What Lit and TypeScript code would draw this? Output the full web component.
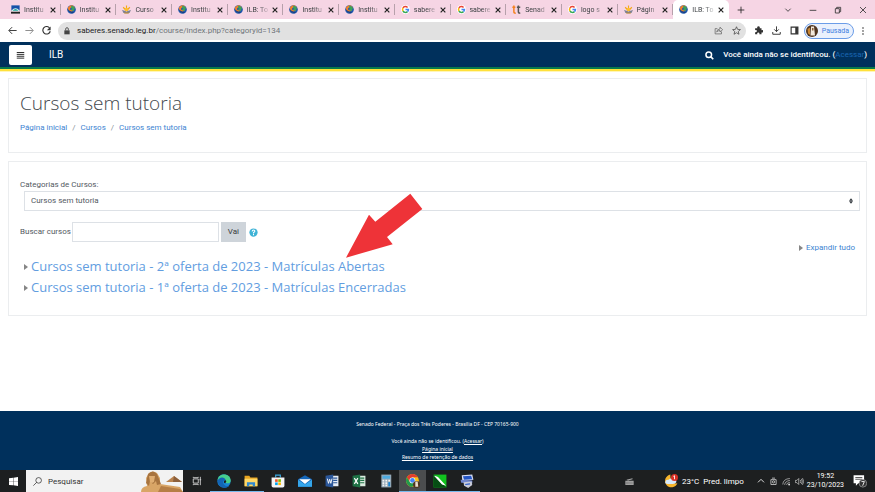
import { LitElement, html, css, svg } from "lit";
import { customElement } from "lit/decorators.js";
import { classMap } from "lit/directives/class-map.js";

type Icon = ReturnType<typeof svg>;

const draw = (body: Icon, cls = "i9", box = "0 0 24 24") =>
  html`<svg class=${cls} viewBox=${box} aria-hidden="true">${body}</svg>`;

const globe = svg`<circle cx="12" cy="12" r="11.5" fill="#1f58ab"/>
  <path d="M2 7Q8-1 16 1l4 5-3 9-8 4-5-5z" fill="#f07f2a"/>
  <path d="M11 2q8 0 10 7l-4 7-6-2z" fill="#3aa35c"/><path d="M1 12q5 8 13 10l5-3-8-2z" fill="#163f86"/>
  <path d="M9 7l4 1-2 6-3-2z" fill="#1f58ab"/>`;
const senate = svg`<path d="M1 1h22v14H1z" fill="#1552a8"/><path d="M1 15Q12 2 23 15l-4 2H5z" fill="#eaf6f4"/>
  <path d="M4 15q8-9 16 0z" fill="#20a5a0"/><path d="M0 18h24v5H0z" fill="#222"/>`;
const sun = svg`<g stroke="#f2a71b" stroke-width="3"><path d="M12 1v9M3 6l6 6M21 6l-6 6"/></g>
  <circle cx="12" cy="12" r="5" fill="#ffbe2e"/><path d="M0 13l9 3 3 2 3-2 9-3-4 8H4z" fill="#7d8295"/>
  <path d="M6 20h12v3H6z" fill="#b98935"/>`;
const google = svg`<circle cx="12" cy="12" r="12" fill="#fff"/><g fill="none" stroke-width="4">
  <path d="M17.5 6.5A7.8 7.8 0 0 0 5.3 8" stroke="#ea4335"/><path d="M5.3 8a7.8 7.8 0 0 0 0 8" stroke="#fbbc05"/>
  <path d="M5.3 16a7.8 7.8 0 0 0 12 1.6" stroke="#34a853"/><path d="M12 12h7.8a7.8 7.8 0 0 1-2.5 5.6" stroke="#4285f4"/></g>`;
const tt = svg`<g fill="none" stroke-width="4"><path d="M5 1v17q0 4 5 4M1 6h8" stroke="#f58220"/>
  <path d="M17 1v17q0 4 5 4M13 6h9" stroke="#555"/></g>`;

const TABS: { icon: Icon; label: string; active?: boolean }[] = [
  { icon: senate, label: "Institu" },
  { icon: globe, label: "Institu" },
  { icon: sun, label: "Curso" },
  { icon: globe, label: "Institu" },
  { icon: globe, label: "ILB: To" },
  { icon: globe, label: "Institu" },
  { icon: globe, label: "Institu" },
  { icon: google, label: "sabere" },
  { icon: google, label: "sabere" },
  { icon: tt, label: "Senad" },
  { icon: google, label: "logo s" },
  { icon: sun, label: "Págin" },
  { icon: globe, label: "ILB: To", active: true },
];

const line = (d: string) => svg`<path d=${d} fill="none" stroke="currentColor" stroke-width="2.5"/>`;
const cross = svg`<path d="M5 5l14 14M19 5L5 19" fill="none" stroke="currentColor" stroke-width="3.5"/>`;

@customElement("browser-chrome")
export class BrowserChrome extends LitElement {
  static styles = css`
    :host { display: block; font: 7px/10px Roboto, sans-serif; color: #3c4043; }
    button { border: 0; padding: 0; margin: 0; background: none; color: inherit; font: inherit; display: flex; align-items: center; justify-content: center; }
    svg { display: block; flex: none; }
    .i8 { width: 8px; height: 8px; }
    .i9 { width: 9px; height: 9px; }
    .i10 { width: 10px; height: 10px; }
    .i12 { width: 12px; height: 12px; }
    .strip { display: flex; height: 19px; background: #f6d5e4; padding-left: 5px; }
    .tabs { display: flex; flex: 0 1 724px; min-width: 0; }
    .tab { flex: 1 1 0; min-width: 0; display: flex; align-items: center; padding: 0 4px 0 6px; box-sizing: border-box; background: linear-gradient(#b7a0ab, #b7a0ab) right center / 1px 11px no-repeat; }
    .tab.active { background: #fff; border-radius: 5px 5px 0 0; }
    .label { flex: 1; min-width: 0; margin: 0 1px 0 4px; white-space: nowrap; mask-image: linear-gradient(90deg, #000 50%, transparent); }
    .close { color: #222; }
    .plus { width: 24px; color: #222; }
    .win { margin-left: auto; display: flex; }
    .win button { width: 25px; color: #333; }
    .bar { display: flex; align-items: center; height: 23px; padding: 0 8px; background: #fff; box-sizing: border-box; color: #333; }
    .nav { display: flex; gap: 8px; }
    .dim { color: #888; }
    .url { flex: 1; display: flex; align-items: center; height: 18px; border-radius: 9px; background: #e1e1e1; margin: 0 8px 0 7px; padding: 0 5px; gap: 6px; }
    .addr { flex: 1; font-size: 8px; color: #70757a; }
    .addr b { font-weight: 400; color: #222; }
    .acts, .tools { display: flex; gap: 9px; }
    .tools { align-items: center; }
    .ext { display: flex; align-items: center; gap: 5px; }
    .profile { border: 1px solid #6b9de8; border-radius: 8px; height: 16px; background: #eaf1fd; color: #3f7de0; gap: 4px; padding: 0 4px 0 1px; }
  `;
  render() {
    return html`
      <div class="strip">
        <div class="tabs">
          ${TABS.map((t) => html`<div class=${classMap({ tab: true, active: !!t.active })}>
            ${draw(t.icon)}<span class="label">${t.label}</span>
            <button class="close" aria-label="Fechar guia">${draw(cross, "i8")}</button>
          </div>`)}
        </div>
        <button class="plus" aria-label="Nova guia">${draw(line("M12 2v20M2 12h20"), "i8")}</button>
        <div class="win">
          <button aria-label="Guias">${draw(line("M4 8l8 8 8-8"), "i8")}</button>
          <button aria-label="Minimizar">${draw(line("M2 13h20"), "i8")}</button>
          <button aria-label="Restaurar">${draw(line("M4 8h12v13H4zM8 8V4h12v13h-4"), "i8")}</button>
          <button aria-label="Fechar">${draw(line("M3 3l18 18M21 3L3 21"), "i8")}</button>
        </div>
      </div>
      <div class="bar">
        <div class="nav">
          <button aria-label="Voltar">${draw(line("M23 12H3M11 3l-9 9 9 9"))}</button>
          <button class="dim" aria-label="Avançar">${draw(line("M1 12h20M13 3l9 9-9 9"))}</button>
          <button aria-label="Recarregar">${draw(svg`<path d="M20 5A10 10 0 1 0 22 14" fill="none" stroke="currentColor" stroke-width="3"/><path d="M23 1v10H13z" fill="currentColor"/>`)}</button>
        </div>
        <div class="url">
          ${draw(svg`<path d="M4 10h16v12H4z" fill="#444"/><path d="M8 10V6a4 4 0 0 1 8 0v4" fill="none" stroke="#444" stroke-width="2.5"/>`, "i8")}
          <span class="addr"><b>saberes.senado.leg.br</b>/course/index.php?categoryid=134</span>
          <div class="acts">
            <button aria-label="Compartilhar">${draw(svg`<path d="M9 7H3v14h17v-6M7 16q1-8 9-8V3l7 7-7 6v-4q-6 0-9 4z" fill="none" stroke="#666" stroke-width="2"/>`)}</button>
            <button aria-label="Favorito">${draw(svg`<path d="M12 2l3 7 7.500.6-5.700 5 1.800 7.400L12 18l-6.600 4 1.800-7.400-5.700-5L9 9z" fill="none" stroke="#444" stroke-width="2"/>`)}</button>
          </div>
        </div>
        <div class="ext">
          <div class="tools">
            <button aria-label="Extensões">${draw(svg`<path d="M3 6h6a3.500 3.500 0 1 1 6 0h5v5a3.500 3.500 0 1 1 0 6v5h-6a3 3 0 1 0-5 0H3v-6a3 3 0 1 0 0-5z" fill="#333"/>`)}</button>
            <button aria-label="Downloads">${draw(line("M12 1v14M6 9l6 6 6-6M2 16v6h20v-6"))}</button>
            <button aria-label="Painel lateral">${draw(svg`<path d="M3 3h18v18H3z" fill="none" stroke="#333" stroke-width="3"/><path d="M14 3h7v18h-7z" fill="#333"/>`)}</button>
          </div>
          <button class="profile">${draw(svg`<circle cx="12" cy="12" r="12" fill="#4e3420"/><path d="M10 3h6l2 18H9z" fill="#f1e8dc"/><path d="M3 8l5-3v15l-4-3z" fill="#c98736"/><path d="M12 6h3v5h-3z" fill="#8a6038"/>`, "i12")}Pausada</button>
          <button aria-label="Menu">${draw(svg`<g fill="#333"><circle cx="12" cy="3" r="2.500"/><circle cx="12" cy="12" r="2.500"/><circle cx="12" cy="21" r="2.500"/></g>`, "i8")}</button>
        </div>
      </div>`;
  }
}

@customElement("course-page")
export class CoursePage extends LitElement {
  static styles = css`
    :host { flex: 1; display: flex; flex-direction: column; font: 8px/12px Roboto, sans-serif; color: #53595f; }
    a { color: #3d84d2; text-decoration: none; }
    button { border: 0; padding: 0; font: inherit; display: flex; align-items: center; justify-content: center; }
    svg { display: block; flex: none; }
    .i9 { width: 9px; height: 9px; }
    .tri { width: 4px; height: 6px; }
    .top { display: flex; align-items: center; height: 30px; box-sizing: border-box; padding: 0 8px 4px 9px; background: linear-gradient(#00305c 25px, #087a4b 25px 27px, #ffe03b 27px 29px, #fff6b8 29px); color: #fff; }
    .burger { width: 23px; height: 20px; background: #fff; border-radius: 2px; color: #222; }
    .top .brand { color: #fff; font-size: 10px; margin: 0 auto 0 17px; }
    .search { background: none; margin-right: 9px; }
    .top a { color: #1a66b3; }
    .login { font-weight: 500; }
    .login a { font-weight: 400; }
    main { flex: 1; padding: 6px 8px 32px; display: flex; flex-direction: column; gap: 8px; }
    section { border: 1px solid #ebedef; background: #fff; padding: 11px; }
    .head { padding-bottom: 18px; }
    h1 { font: 300 19px/26px "Open Sans", sans-serif; margin: 0 0 6px; color: #43484d; }
    ol { display: flex; list-style: none; margin: 0; padding: 0; gap: 5px; }
    li + li::before { content: "/"; margin-right: 5px; color: #868e96; }
    .list { position: relative; padding: 17px 11px; }
    .cat { display: block; }
    .pick { position: relative; margin: 0 -5px 0 4px; }
    select { appearance: none; display: block; width: 100%; height: 20px; box-sizing: border-box; padding: 0 6px; border: 1px solid #dde1e6; border-radius: 0; background: #fff; font: inherit; color: inherit; }
    .sort { position: absolute; right: 7px; top: 7px; width: 4px; height: 6px; pointer-events: none; }
    form { display: flex; align-items: center; margin-top: 11px; height: 20px; }
    input { width: 147px; height: 20px; box-sizing: border-box; border: 1px solid #dde1e6; margin: 0 2px 0 1px; padding: 0 4px; font: inherit; }
    .go { width: 25px; height: 20px; background: #ced4da; color: #373a3c; }
    .help { background: none; margin-left: 3px; }
    .expand { display: flex; justify-content: flex-end; align-items: center; gap: 3px; }
    .row { display: flex; align-items: center; gap: 3px; margin-left: 4px; font: 400 13px/21px "Open Sans", sans-serif; }
    .row a { color: #629ddf; }
    .rows { margin-top: 2px; }
    .arrow { position: absolute; left: 337px; top: 31px; width: 78px; height: 66px; pointer-events: none; }
    footer { background: #00305c; color: #fff; font: 5px/8px "Noto Sans", sans-serif; text-align: center; height: 59px; box-sizing: border-box; padding-top: 9px; }
    footer p { margin: 0 0 9px; }
    footer a { color: #fff; text-decoration: underline; }
  `;
  private tri = draw(svg`<path d="M0 0l4 3-4 3z" fill="#868686"/>`, "tri", "0 0 4 6");
  render() {
    return html`
      <header class="top">
        <button class="burger" aria-label="Menu">${draw(line("M2 4h20M2 9h20M2 14h20M2 19h20"), "i9")}</button>
        <a class="brand" href="#">ILB</a>
        <button class="search" aria-label="Buscar">${draw(svg`<circle cx="10" cy="10" r="7.500" fill="none" stroke="#fff" stroke-width="4"/><path d="M15 15l7 7" stroke="#fff" stroke-width="4.500"/>`)}</button>
        <span class="login">Você ainda não se identificou. (<a href="#">Acessar</a>)</span>
      </header>
      <main>
        <section class="head">
          <h1>Cursos sem tutoria</h1>
          <nav><ol><li><a href="#">Página inicial</a></li><li><a href="#">Cursos</a></li><li><a href="#">Cursos sem tutoria</a></li></ol></nav>
        </section>
        <section class="list">
          <label class="cat" for="cat">Categorias de Cursos:</label>
          <div class="pick">
            <select id="cat"><option>Cursos sem tutoria</option></select>
            ${draw(svg`<path d="M0 3.500L3 0l3 3.500zM0 4.500h6L3 8z" fill="#343a40"/>`, "sort", "0 0 6 8")}
          </div>
          <form>
            <label for="q">Buscar cursos</label><input id="q" type="text" />
            <button class="go" type="button">Vai</button>
            <button class="help" type="button" aria-label="Ajuda">${draw(svg`<circle cx="12" cy="12" r="11" fill="#3fb3d6"/><path d="M8.500 9.500q0-4 3.500-4t3.500 3.300q0 2-3.500 3.200v2.500M12 16v3" fill="none" stroke="#fff" stroke-width="2.800"/>`)}</button>
          </form>
          <div class="expand">${this.tri}<a href="#">Expandir tudo</a></div>
          <div class="rows">
            <div class="row">${this.tri}<a href="#">Cursos sem tutoria - 2ª oferta de 2023 - Matrículas Abertas</a></div>
            <div class="row">${this.tri}<a href="#">Cursos sem tutoria - 1ª oferta de 2023 - Matrículas Encerradas</a></div>
          </div>
          ${draw(svg`<path d="M64.300.7L76.300 16 41 44l5.700 7.300L0 64.700l23-43 6.300 7z" fill="#ee3338"/>`, "arrow", "0 0 78 66")}
        </section>
      </main>
      <footer>
        <p>Senado Federal - Praça dos Três Poderes - Brasília DF - CEP 70165-900</p>
        <div>Você ainda não se identificou. (<a href="#">Acessar</a>)</div>
        <div><a href="#">Página inicial</a></div>
        <div><a href="#">Resumo de retenção de dados</a></div>
      </footer>`;
  }
}

const APPS: { name: string; icon: Icon; open?: boolean; active?: boolean }[] = [
  { name: "Visão de tarefas", icon: svg`<path d="M3 7h12v10H3zM3 2v2h12V2M3 22v-2h12v2M20 2v20M18 9h4" fill="none" stroke="#ddd" stroke-width="2"/>` },
  { name: "Edge", open: true, icon: svg`<circle cx="12" cy="12" r="11.500" fill="#1683d3"/><path d="M1 10C3-3 23-2 23.500 11c0 5-5 6-9 4 3-5-3-9-9-6-2 1-3 2-4.500 1z" fill="#46cf8c"/><path d="M1 12C3 4 14 4 15 11c-5-1-6 4-3 7 3 4 7 3 9 2-6 7-19 3-20-8z" fill="#1264b5"/><path d="M12 12q3-3 4 1l-2 3q-3 0-2-4z" fill="#1d2020"/>` },
  { name: "Arquivos", open: true, icon: svg`<path d="M1 3h8l2 3h12v15H1z" fill="#e8a521"/><path d="M1 8h22v13H1z" fill="#ffd867"/><path d="M5 14h14v7h-4v-3H9v3H5z" fill="#2f87d0"/>` },
  { name: "Loja", icon: svg`<path d="M8 6V2h8v4" fill="none" stroke="#39a9e0" stroke-width="2"/><path d="M1 6h22v14q0 3-3 3H4q-3 0-3-3z" fill="#f4f4f4"/><path d="M7 9h4.500v4.500H7z" fill="#f25022"/><path d="M12.500 9H17v4.500h-4.500z" fill="#7fba00"/><path d="M7 14.500h4.500V19H7z" fill="#00a4ef"/><path d="M12.500 14.500H17V19h-4.500z" fill="#ffb900"/>` },
  { name: "Email", icon: svg`<path d="M0 9l12-7 12 7v13H0z" fill="#1466b8"/><path d="M2 9h20l-10 8z" fill="#fff"/><path d="M0 10l12 8 12-8v12H0z" fill="#35a6ea"/>` },
  { name: "Word", icon: svg`<path d="M12 3h11v18H12z" fill="#e6edf7"/><path d="M14 7h7M14 11h7M14 15h7" stroke="#2b5797" stroke-width="2"/><path d="M1 3l13-2v22L1 21z" fill="#2b579a"/><path d="M4 8l2 8 2-7 2 7 2-8" fill="none" stroke="#fff" stroke-width="1.600"/>` },
  { name: "Excel", icon: svg`<path d="M12 3h11v18H12z" fill="#d9eadf"/><path d="M14 7h7M14 11h7M14 15h7" stroke="#217346" stroke-width="2"/><path d="M1 3l13-2v22L1 21z" fill="#1e7145"/><path d="M4 7l6 10M10 7L4 17" stroke="#fff" stroke-width="2"/>` },
  { name: "Calculadora", icon: svg`<path d="M4 1h17v22H4z" fill="#97a9b7"/><path d="M6 3h13v5H6z" fill="#4daae0"/><path d="M6 10h3v3H6zm5 0h3v3h-3zm5 0h3v3h-3zM6 14h3v3H6zm5 0h3v3h-3zM6 18h3v3H6zm5 0h3v3h-3z" fill="#f3f3f3"/><path d="M16 14h3v7h-3z" fill="#1684d5"/>` },
  { name: "Chrome", open: true, active: true, icon: svg`<circle cx="11" cy="11" r="11" fill="#fbc116"/><path d="M1.500 5.500A11 11 0 0 1 20.500 5.500H11L7 14z" fill="#e33b2e"/><path d="M1.500 5.500A11 11 0 0 0 11 22l5-8H7z" fill="#229a4c"/><circle cx="11" cy="11" r="5" fill="#fff"/><circle cx="11" cy="11" r="4" fill="#4285f4"/><circle cx="18" cy="18" r="6" fill="#4e3420"/><path d="M16 13h4l1 9h-5z" fill="#eadccb"/>` },
  { name: "Assinador", open: true, icon: svg`<path d="M1 1h22v22H1z" fill="#11c31f"/><path d="M1 1l22 22H1z" fill="#064e14"/><path d="M5 5l3 1 11 12-3-1z" fill="#fff" stroke="#fff" stroke-width="2"/>` },
  { name: "Acesso remoto", open: true, icon: svg`<path d="M3 2l18-1 2 9-19 2z" fill="#d6dcf0"/><path d="M5 4l14-1 2 6-14 1z" fill="#2456c5"/><path d="M1 10l20 1v5L2 15z" fill="#6f86cf"/><path d="M6 14l14-1 1 6-7 5-7-4z" fill="#c7cad8"/><path d="M9 18l8-1" stroke="#2456c5" stroke-width="2"/>` },
];

@customElement("task-bar")
export class TaskBar extends LitElement {
  static styles = css`
    :host { display: flex; height: 22px; background: #1d1f20; color: #fff; font: 7px/9px Roboto, sans-serif; }
    button { border: 0; padding: 0; background: none; color: inherit; font: inherit; display: flex; align-items: center; justify-content: center; box-sizing: border-box; }
    svg { display: block; flex: none; }
    .start { width: 26px; }
    .i8 { width: 8px; height: 8px; }
    .i9 { width: 9px; height: 9px; }
    .i10 { width: 10px; height: 10px; }
    .i14 { width: 14px; height: 14px; }
    .find { display: flex; align-items: center; width: 157px; background: #f2f2f2; color: #333; padding-left: 7px; box-sizing: border-box; }
    input { flex: 1; min-width: 0; border: 0; background: none; padding: 0 0 0 6px; font: inherit; font-size: 8px; }
    input::placeholder { color: #333; opacity: 1; }
    .sphinx { width: 42px; height: 22px; }
    .app { width: 27px; border-top: 1px solid transparent; border-bottom: 1px solid transparent; }
    .open { border-bottom-color: #76b9ed; }
    .active { background: #4b4d4e; border-top-color: #4b4d4e; }
    .tray { margin-left: auto; display: flex; align-items: center; padding-right: 8px; }
    .kb { margin-right: 30px; }
    .weather { gap: 4px; margin-right: 13px; font-size: 8px; }
    .sys { display: flex; gap: 4px; }
    .clock { text-align: center; margin: 0 9px 0 3px; }
  `;
  render() {
    return html`
      <button class="start" aria-label="Iniciar">${draw(svg`<path d="M0 3l11-1v9H0zM12 2l12-2v11H12zM0 12h11v10L0 21zM12 12h12v12l-12-2z" fill="#fff"/>`)}</button>
      <label class="find">
        ${draw(svg`<circle cx="15" cy="9" r="7.500" fill="none" stroke="#333" stroke-width="2"/><path d="M10 14l-9 9" stroke="#333" stroke-width="2"/>`)}
        <input type="text" placeholder="Pesquisar" aria-label="Pesquisar" />
        ${draw(svg`<path d="M25 12l8-6 8 6z" fill="#b9834f"/><path d="M33 6l8 6h-9z" fill="#8b5f3b"/><path d="M0 22q0-5 6-6l-1-8 3-5q4-3 8 0l3 5v6l20 3 3 5z" fill="#d9a566"/><path d="M5 13l2-9q5-5 9 0l4 10-4 1-1-4-3 3-3-3-1 5z" fill="#a8743f"/><path d="M8 6h6l-1 6-2 1-2-1z" fill="#e0ae72"/><path d="M20 16l19 3 3 3H17z" fill="#b67e46"/>`, "sphinx", "0 0 42 22")}
      </label>
      ${APPS.map((a, n) => html`<button class=${classMap({ app: true, open: !!a.open, active: !!a.active })} aria-label=${a.name}>${draw(a.icon, n ? "i14" : "i10")}</button>`)}
      <div class="tray">
        <button class="kb" aria-label="Teclado">${draw(svg`<path d="M1 10h22v11H1zM4 7l16-4v3L8 9z" fill="#aaa"/><path d="M3 14h18M3 18h18" stroke="#444" stroke-width="1.500" stroke-dasharray="2 1"/>`)}</button>
        <button class="weather">${draw(svg`<path d="M11 1a11 11 0 1 0 12 15q-13 2-12-15z" fill="#f7b52c"/><path d="M2 14q1-5 6-4 4-5 8 0 6-1 5 4-1 3-6 3H6q-4 0-4-3z" fill="#d6e9fb"/><circle cx="18" cy="6" r="6" fill="#d93025"/><path d="M16 4l2-1v6" fill="none" stroke="#fff" stroke-width="1.500"/>`, "i14")}<span>23°C</span><span>Pred. limpo</span></button>
        <div class="sys">
          <button aria-label="Ícones ocultos">${draw(line("M3 16l9-9 9 9"), "i8")}</button>
          <button aria-label="Câmera">${draw(svg`<path d="M5 7h14v13H5zM8 3h8" fill="none" stroke="#ddd" stroke-width="2"/><circle cx="12" cy="13" r="3" fill="none" stroke="#ddd" stroke-width="2"/>`)}</button>
          <button aria-label="Rede">${draw(svg`<path d="M2 20Q3 5 21 4M7 21Q8 11 21 9M12 21q1-6 9-7" fill="none" stroke="#bbb" stroke-width="2"/><circle cx="19" cy="20" r="2.500" fill="#ddd"/>`)}</button>
          <button aria-label="Volume">${draw(svg`<path d="M1 9h4l5-5v16l-5-5H1zM14 8q3 4 0 8M17 5q5 7 0 14M20 3q6 9 0 18" fill="none" stroke="#ddd" stroke-width="1.700"/>`)}</button>
        </div>
        <div class="clock">19:52<br />23/10/2023</div>
        <button aria-label="Notificações">${draw(svg`<path d="M1 2h18v14H9l-4 4v-4H1z" fill="#fff"/><path d="M4 6h12M4 9h12" stroke="#444" stroke-width="1.500"/><circle cx="17" cy="16" r="6.500" fill="#333" stroke="#bbb"/><path d="M14.500 13h5l-3 7" fill="none" stroke="#fff" stroke-width="1.500"/>`, "i14")}</button>
      </div>`;
  }
}

@customElement("app-root")
export class AppRoot extends LitElement {
  static styles = css`
    :host { display: flex; flex-direction: column; min-height: 100vh; background: #fff; }
  `;
  render() {
    return html`<browser-chrome></browser-chrome><course-page></course-page><task-bar></task-bar>`;
  }
}
